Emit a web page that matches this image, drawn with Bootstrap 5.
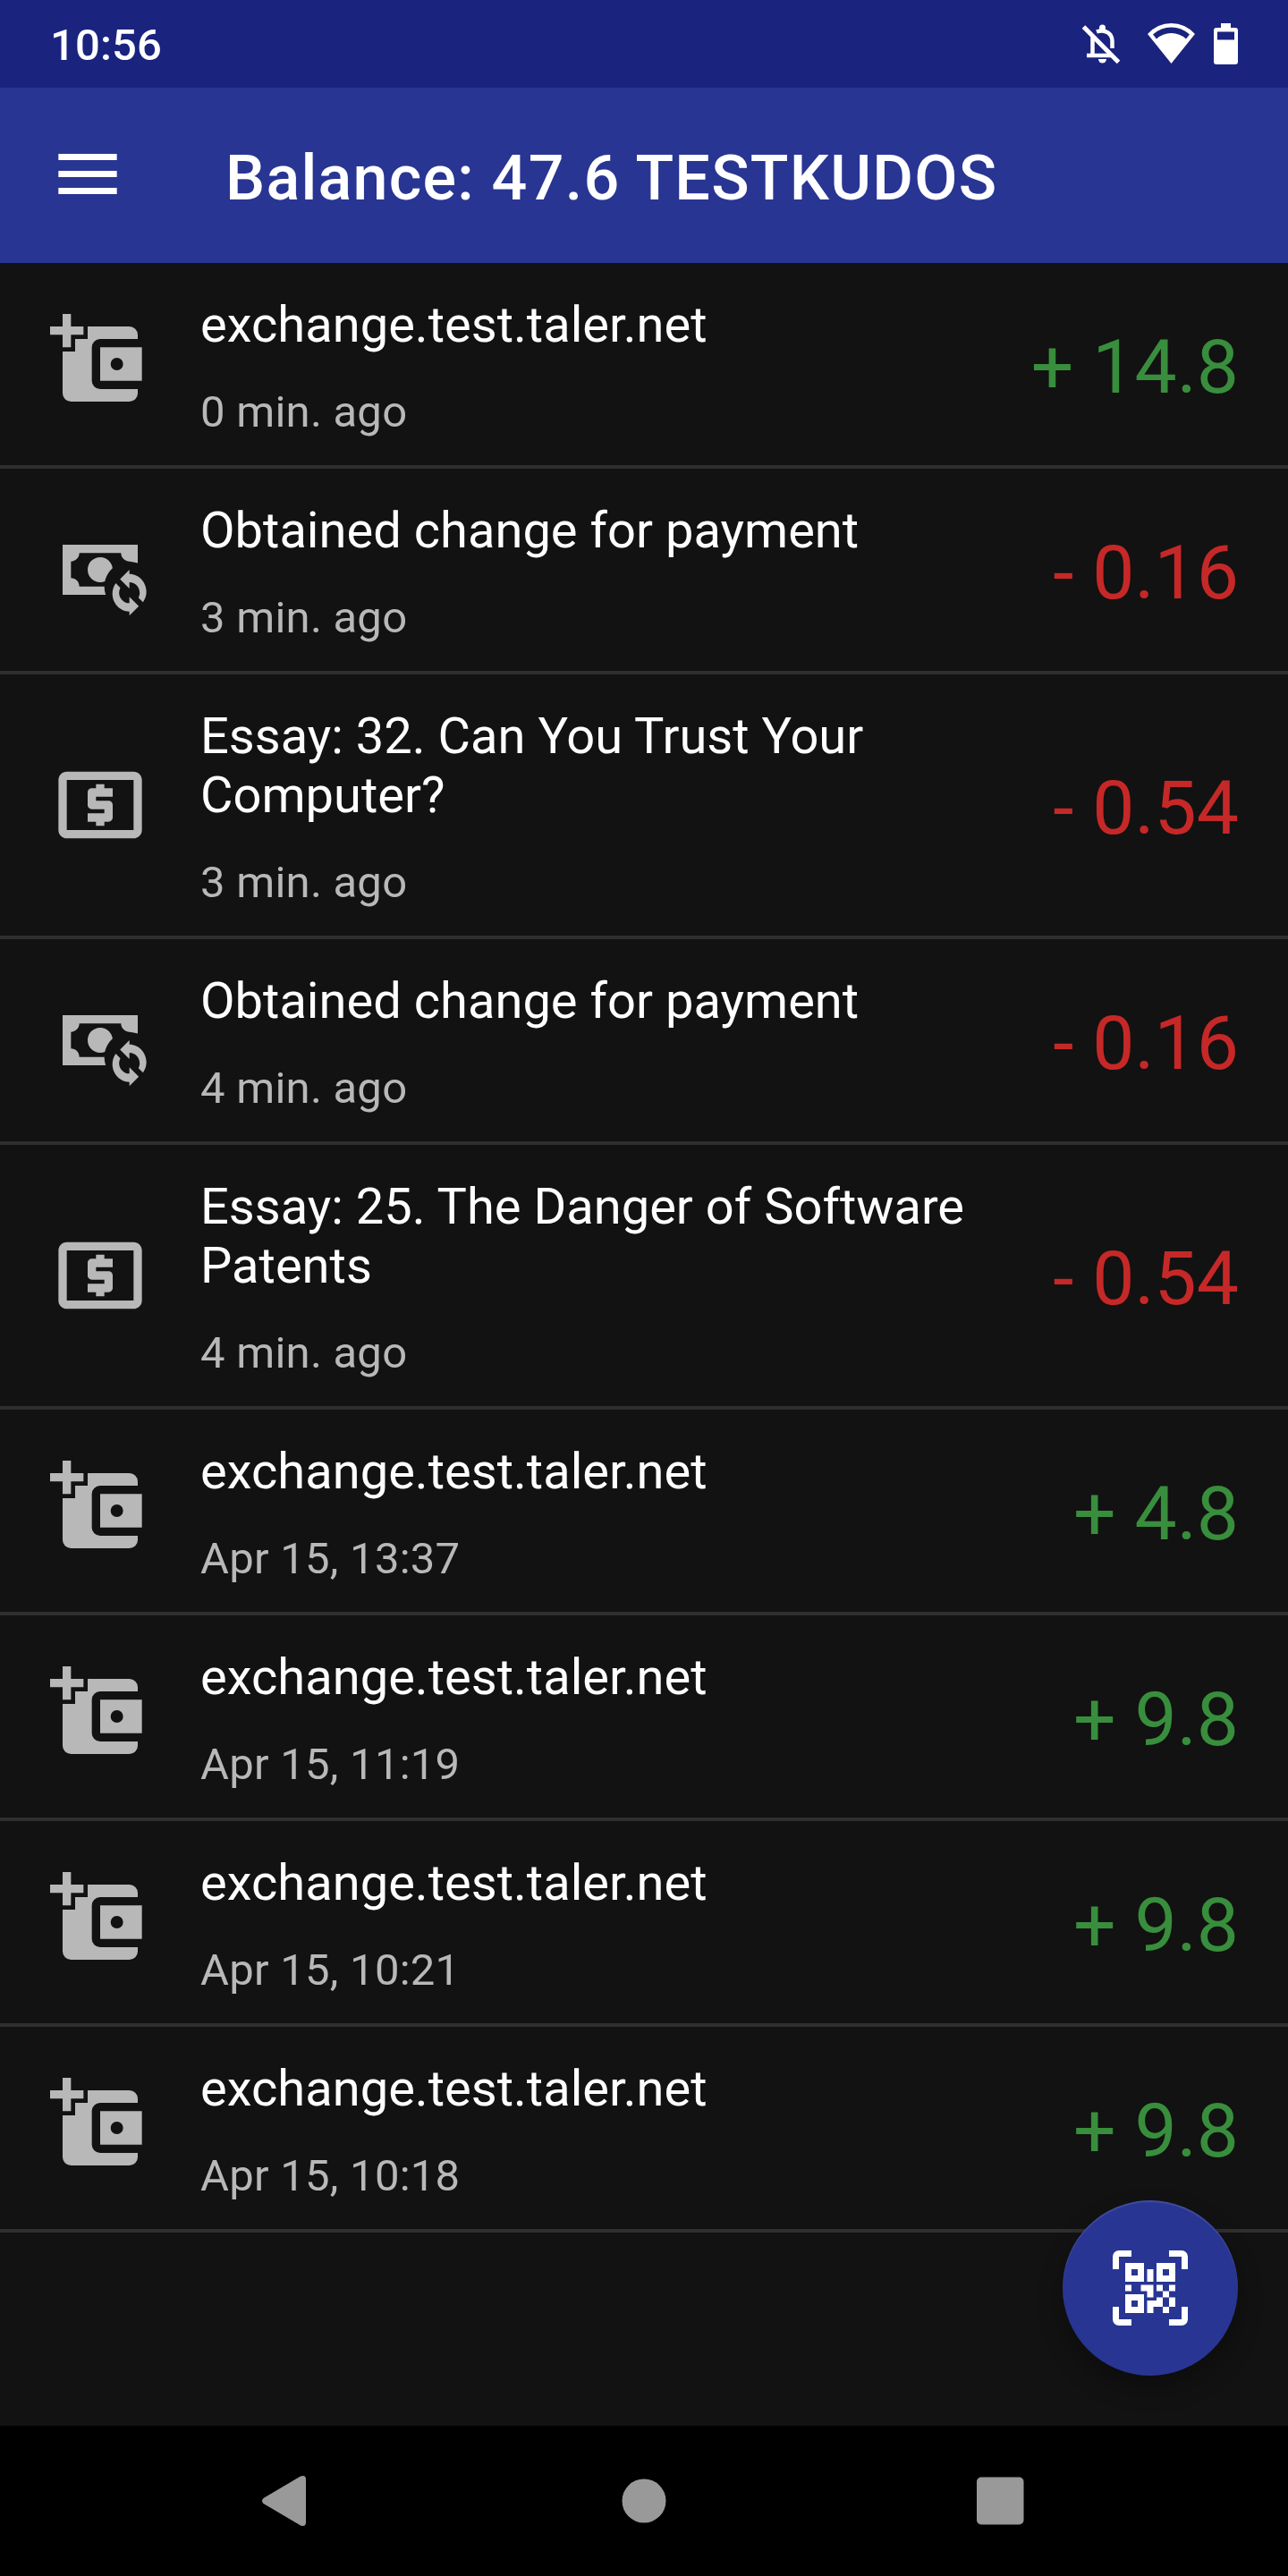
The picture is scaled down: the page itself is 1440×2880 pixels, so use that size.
<!DOCTYPE html>
<html lang="en">
<head>
<meta charset="utf-8">
<meta name="viewport" content="width=device-width, initial-scale=1">
<title>Wallet</title>
<link href="https://cdn.jsdelivr.net/npm/bootstrap@5.3.0/dist/css/bootstrap.min.css" rel="stylesheet">
<style>
  body { background: #121212; color: #fff; font-family: Roboto, sans-serif; letter-spacing: 0; }
  .screen { width: 1440px; height: 2880px; overflow: hidden; }
  .status-strip { height: 98px; background: #1a237e; padding: 0 56px; }
  .clock { font-size: 49px; line-height: 57px; font-weight: 500; padding-top: 3px; letter-spacing: .15px; }
  .app-top { height: 196px; background: #283593; padding: 0 56px; }
  .app-title { font-size: 70px; line-height: 82px; font-weight: 500; margin-left: 112px; padding-top: 6px; letter-spacing: 1.25px; }
  .entry { border-bottom: 4px solid #2f2f2f; padding: 36px 56px 30px; }
  .entry-icon { width: 112px; height: 112px; margin: -3px 56px -3px 0; fill: #b8b8b8; }
  .entry-icon-wrap { margin-top: -6px; line-height: 0; }
  .entry-title { font-size: 56px; line-height: 66px; letter-spacing: .03px; }
  .entry-time { font-size: 49px; line-height: 58px; color: #b8b8b8; margin-top: 36px; letter-spacing: .25px; }
  .amount { font-size: 84px; line-height: 98px; padding-top: 2px; margin-right: -1px; }
  .amount-in { color: #388e3c; }
  .amount-out { color: #c62828; }
  .fab { width: 196px; height: 196px; right: 56px; top: 2460px; background: #283593; box-shadow: 0 14px 28px rgba(0,0,0,.3), inset 0 2px 1px rgba(255,255,255,.12); }
  .nav-strip { height: 168px; background: #000; }
</style>
<script src="https://cdn.jsdelivr.net/npm/bootstrap@5.3.0/dist/js/bootstrap.bundle.min.js"></script>
</head>
<body>
<svg class="d-none" xmlns="http://www.w3.org/2000/svg">
  <symbol id="withdraw" viewBox="0 0 24 24"><path fill-rule="evenodd" d="M3 0H5V3H8V5H5V8H3V5H0V3H3ZM9 3H19A2 2 0 0 1 21 5V6H12A2 2 0 0 0 10 8V16A2 2 0 0 0 12 18H21V19A2 2 0 0 1 19 21H5A2 2 0 0 1 3 19V9H6V6H9ZM12 8H22V16H12ZM16 10.5A1.5 1.5 0 1 0 16 13.5A1.5 1.5 0 1 0 16 10.5Z"/></symbol>
  <symbol id="change" viewBox="0 0 24 24"><path d="M3 6V18H13.32C13.1 17.33 13 16.66 13 16H7C7 14.9 6.11 14 5 14V10C6.11 10 7 9.11 7 8H17C17 9.11 17.9 10 19 10C19.67 10.06 20.34 10.18 21 10.4V6ZM12 9C10.3 9.03 9 10.3 9 12C9 13.7 10.3 14.94 12 15C12.38 15 12.77 14.92 13.14 14.77C13.41 13.67 13.86 12.63 14.97 11.61C14.85 10.28 13.59 8.97 12 9M19 12L16.75 14.25L19 16.5V15C20.85 15 22.06 17.03 21.17 18.67L22.26 19.76C24.29 16.91 22.24 13 19 13ZM19 23L21.25 20.75L19 18.5V20C17.15 20 15.94 17.97 16.83 16.33L15.74 15.24C13.71 18.09 15.76 22 19 22Z"/></symbol>
  <symbol id="payment" viewBox="0 0 24 24"><path d="M11 17h2v-1h1c.55 0 1-.45 1-1v-3c0-.55-.45-1-1-1h-3v-1h4V8h-2V7h-2v1h-1c-.55 0-1 .45-1 1v3c0 .55.45 1 1 1h3v1H9v2h2v1zm9-13H4c-1.11 0-1.99.89-1.99 2L2 18c0 1.11.89 2 2 2h16c1.11 0 2-.89 2-2V6c0-1.11-.89-2-2-2zm0 14H4V6h16v12z"/></symbol>
</svg>
<div class="screen position-relative d-flex flex-column">
  <div class="status-strip d-flex align-items-center justify-content-between">
    <div class="clock">10:56</div>
    <svg width="190" height="60" viewBox="1194 19 190 60" fill="#fff">
      <path d="M1211.500 30L1250.500 69.500" fill="none" stroke="#fff" stroke-width="5"/>
      <path d="M1221.500 41V62M1215 62H1244M1226 35.500C1236 32 1243.500 38 1243.500 46V54" fill="none" stroke="#fff" stroke-width="4.500"/>
      <circle cx="1232.500" cy="31" r="3.500"/><path d="M1228 66H1237A4.500 4.500 0 0 1 1228 66Z"/>
      <path fill-rule="evenodd" d="M1309.500 71L1283 38Q1294 26 1309.500 26T1336 38ZM1293 43.500Q1300 37 1309.500 37T1326 43.500L1330 38.500Q1321 30.500 1309.500 30.500T1289 38.500Z"/>
      <path fill-rule="evenodd" d="M1365 26H1376V31H1381Q1384 31 1384 34V69Q1384 72 1381 72H1360Q1357 72 1357 69V34Q1357 31 1360 31H1365ZM1361 35.500V44.500H1380V35.500Z"/>
    </svg>
  </div>
  <header class="app-top d-flex align-items-center">
    <svg width="84" height="84" viewBox="0 0 84 84" fill="#fff"><path d="M9.330 18H74.670V25H9.330ZM9.330 37H74.670V44H9.330ZM9.330 56H74.670V63H9.330Z"/></svg>
    <h1 class="app-title mb-0">Balance: 47.6 TESTKUDOS</h1>
  </header>
  <main class="flex-grow-1">
    <div class="entry d-flex align-items-center"><div class="entry-icon-wrap"><svg class="entry-icon"><use href="#withdraw"/></svg></div><div class="flex-grow-1"><div class="entry-title">exchange.test.taler.net</div><div class="entry-time">0 min. ago</div></div><div class="amount amount-in text-nowrap">+ 14.8</div></div>
    <div class="entry d-flex align-items-center"><div class="entry-icon-wrap"><svg class="entry-icon"><use href="#change"/></svg></div><div class="flex-grow-1"><div class="entry-title">Obtained change for payment</div><div class="entry-time">3 min. ago</div></div><div class="amount amount-out text-nowrap">- 0.16</div></div>
    <div class="entry d-flex align-items-center"><div class="entry-icon-wrap"><svg class="entry-icon"><use href="#payment"/></svg></div><div class="flex-grow-1"><div class="entry-title">Essay: 32. Can You Trust Your<br>Computer?</div><div class="entry-time">3 min. ago</div></div><div class="amount amount-out text-nowrap">- 0.54</div></div>
    <div class="entry d-flex align-items-center"><div class="entry-icon-wrap"><svg class="entry-icon"><use href="#change"/></svg></div><div class="flex-grow-1"><div class="entry-title">Obtained change for payment</div><div class="entry-time">4 min. ago</div></div><div class="amount amount-out text-nowrap">- 0.16</div></div>
    <div class="entry d-flex align-items-center"><div class="entry-icon-wrap"><svg class="entry-icon"><use href="#payment"/></svg></div><div class="flex-grow-1"><div class="entry-title">Essay: 25. The Danger of Software<br>Patents</div><div class="entry-time">4 min. ago</div></div><div class="amount amount-out text-nowrap">- 0.54</div></div>
    <div class="entry d-flex align-items-center"><div class="entry-icon-wrap"><svg class="entry-icon"><use href="#withdraw"/></svg></div><div class="flex-grow-1"><div class="entry-title">exchange.test.taler.net</div><div class="entry-time">Apr 15, 13:37</div></div><div class="amount amount-in text-nowrap">+ 4.8</div></div>
    <div class="entry d-flex align-items-center"><div class="entry-icon-wrap"><svg class="entry-icon"><use href="#withdraw"/></svg></div><div class="flex-grow-1"><div class="entry-title">exchange.test.taler.net</div><div class="entry-time">Apr 15, 11:19</div></div><div class="amount amount-in text-nowrap">+ 9.8</div></div>
    <div class="entry d-flex align-items-center"><div class="entry-icon-wrap"><svg class="entry-icon"><use href="#withdraw"/></svg></div><div class="flex-grow-1"><div class="entry-title">exchange.test.taler.net</div><div class="entry-time">Apr 15, 10:21</div></div><div class="amount amount-in text-nowrap">+ 9.8</div></div>
    <div class="entry d-flex align-items-center"><div class="entry-icon-wrap"><svg class="entry-icon"><use href="#withdraw"/></svg></div><div class="flex-grow-1"><div class="entry-title">exchange.test.taler.net</div><div class="entry-time">Apr 15, 10:18</div></div><div class="amount amount-in text-nowrap">+ 9.8</div></div>
  </main>
  <button class="fab position-absolute border-0 rounded-circle p-0 d-flex align-items-center justify-content-center" aria-label="Scan">
    <svg width="84" height="84" viewBox="0 0 24 24" fill="#fff"><path fill-rule="evenodd" d="M2 0H6V2H2V6H0V2A2 2 0 0 1 2 0ZM18 0H22A2 2 0 0 1 24 2V6H22V2H18ZM0 18H2V22H6V24H2A2 2 0 0 1 0 22ZM22 18H24V22A2 2 0 0 1 22 24H18V22H22ZM4 4H10V10H4ZM6 6V8H8V6ZM14 4H20V10H14ZM16 6V8H18V6ZM4 14H10V20H4ZM6 16V18H8V16ZM11 6H13V10H11ZM4 11H6V13H4ZM9 11H13V15H11V13H9ZM14 11H16V13H14ZM18 11H20V13H18ZM16 13H18V15H16ZM18 15H20V18H18ZM14 15H16V18H13V20H11V16H14ZM16 18H18V20H16Z"/></svg>
  </button>
  <nav class="nav-strip d-flex align-items-center">
    <svg width="1440" height="168" viewBox="0 2712 1440 168" fill="#999">
      <path d="M294.500 2793L336 2768.500Q342 2766.500 342 2772V2820Q342 2825.500 336 2823.500L294.500 2799Q291.500 2796 294.500 2793Z"/>
      <circle cx="720" cy="2796" r="24.500"/><rect x="1092" y="2769.500" width="52.500" height="53" rx="5"/>
    </svg>
  </nav>
</div>
</body>
</html>
